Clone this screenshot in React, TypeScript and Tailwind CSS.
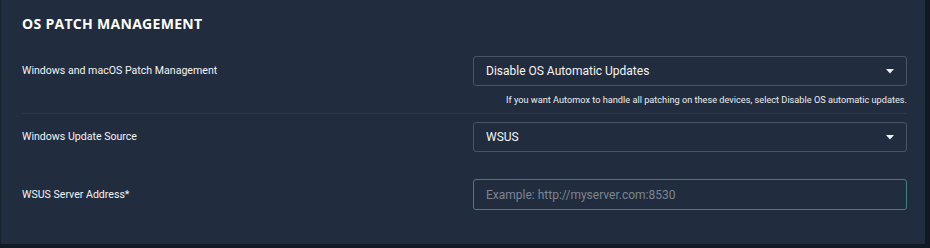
function Caret() {
  return (
    <svg width="8" height="5" viewBox="0 0 8 5" className="shrink-0">
      <path d="M0 0 L8 0 L4 4.5 Z" fill="#f1f3f5" />
    </svg>
  );
}

function SelectBox({ value }: { value: string }) {
  return (
    <div className="flex h-[30px] w-[434px] items-center justify-between rounded-[3px] border border-[#4a5566] pl-[12px] pr-[12px] text-[12px] text-[#f4f5f7]">
      <span>{value}</span>
      <Caret />
    </div>
  );
}

export default function App() {
  return (
    <div
      className="h-[248px] w-[930px] bg-[#111925]"
      style={{ fontFamily: "Roboto, 'Liberation Sans', sans-serif" }}
    >
      <div className="h-[244px] w-[925px] border-l border-[#18202c] bg-[#212c3e] pl-[21px] pr-[18px] pt-[14px]">
        <h2
          className="text-[14px] font-bold leading-[20px] tracking-[0.3px] text-white"
          style={{ fontFamily: "'Open Sans', sans-serif" }}
        >
          OS PATCH MANAGEMENT
        </h2>

        {/* Patch management row */}
        <div className="mt-[22px] flex items-center">
          <div className="flex-1 text-[10.6px] text-[#f3f4f7]">
            Windows and macOS Patch Management
          </div>
          <SelectBox value="Disable OS Automatic Updates" />
        </div>
        <div className="mt-[7px] text-right text-[9.2px] leading-[14px] text-[#eceef1]">
          If you want Automox to handle all patching on these devices, select Disable OS automatic updates.
        </div>
        <div className="mt-[6px] h-px bg-[#2d394b]" />

        {/* Update source row */}
        <div className="mt-[8px] flex items-center">
          <div className="flex-1 text-[10.6px] text-[#f3f4f7]">Windows Update Source</div>
          <SelectBox value="WSUS" />
        </div>

        {/* Server address row */}
        <div className="mt-[27px] flex items-center">
          <div className="flex-1 text-[10.6px] text-[#f3f4f7]">WSUS Server Address*</div>
          <input
            className="h-[31px] w-[434px] rounded-[3px] border border-[#3f8189] bg-transparent pl-[12px] text-[12px] text-white outline-none placeholder:text-[#7d8591]"
            placeholder="Example: http://myserver.com:8530"
          />
        </div>
      </div>
    </div>
  );
}
